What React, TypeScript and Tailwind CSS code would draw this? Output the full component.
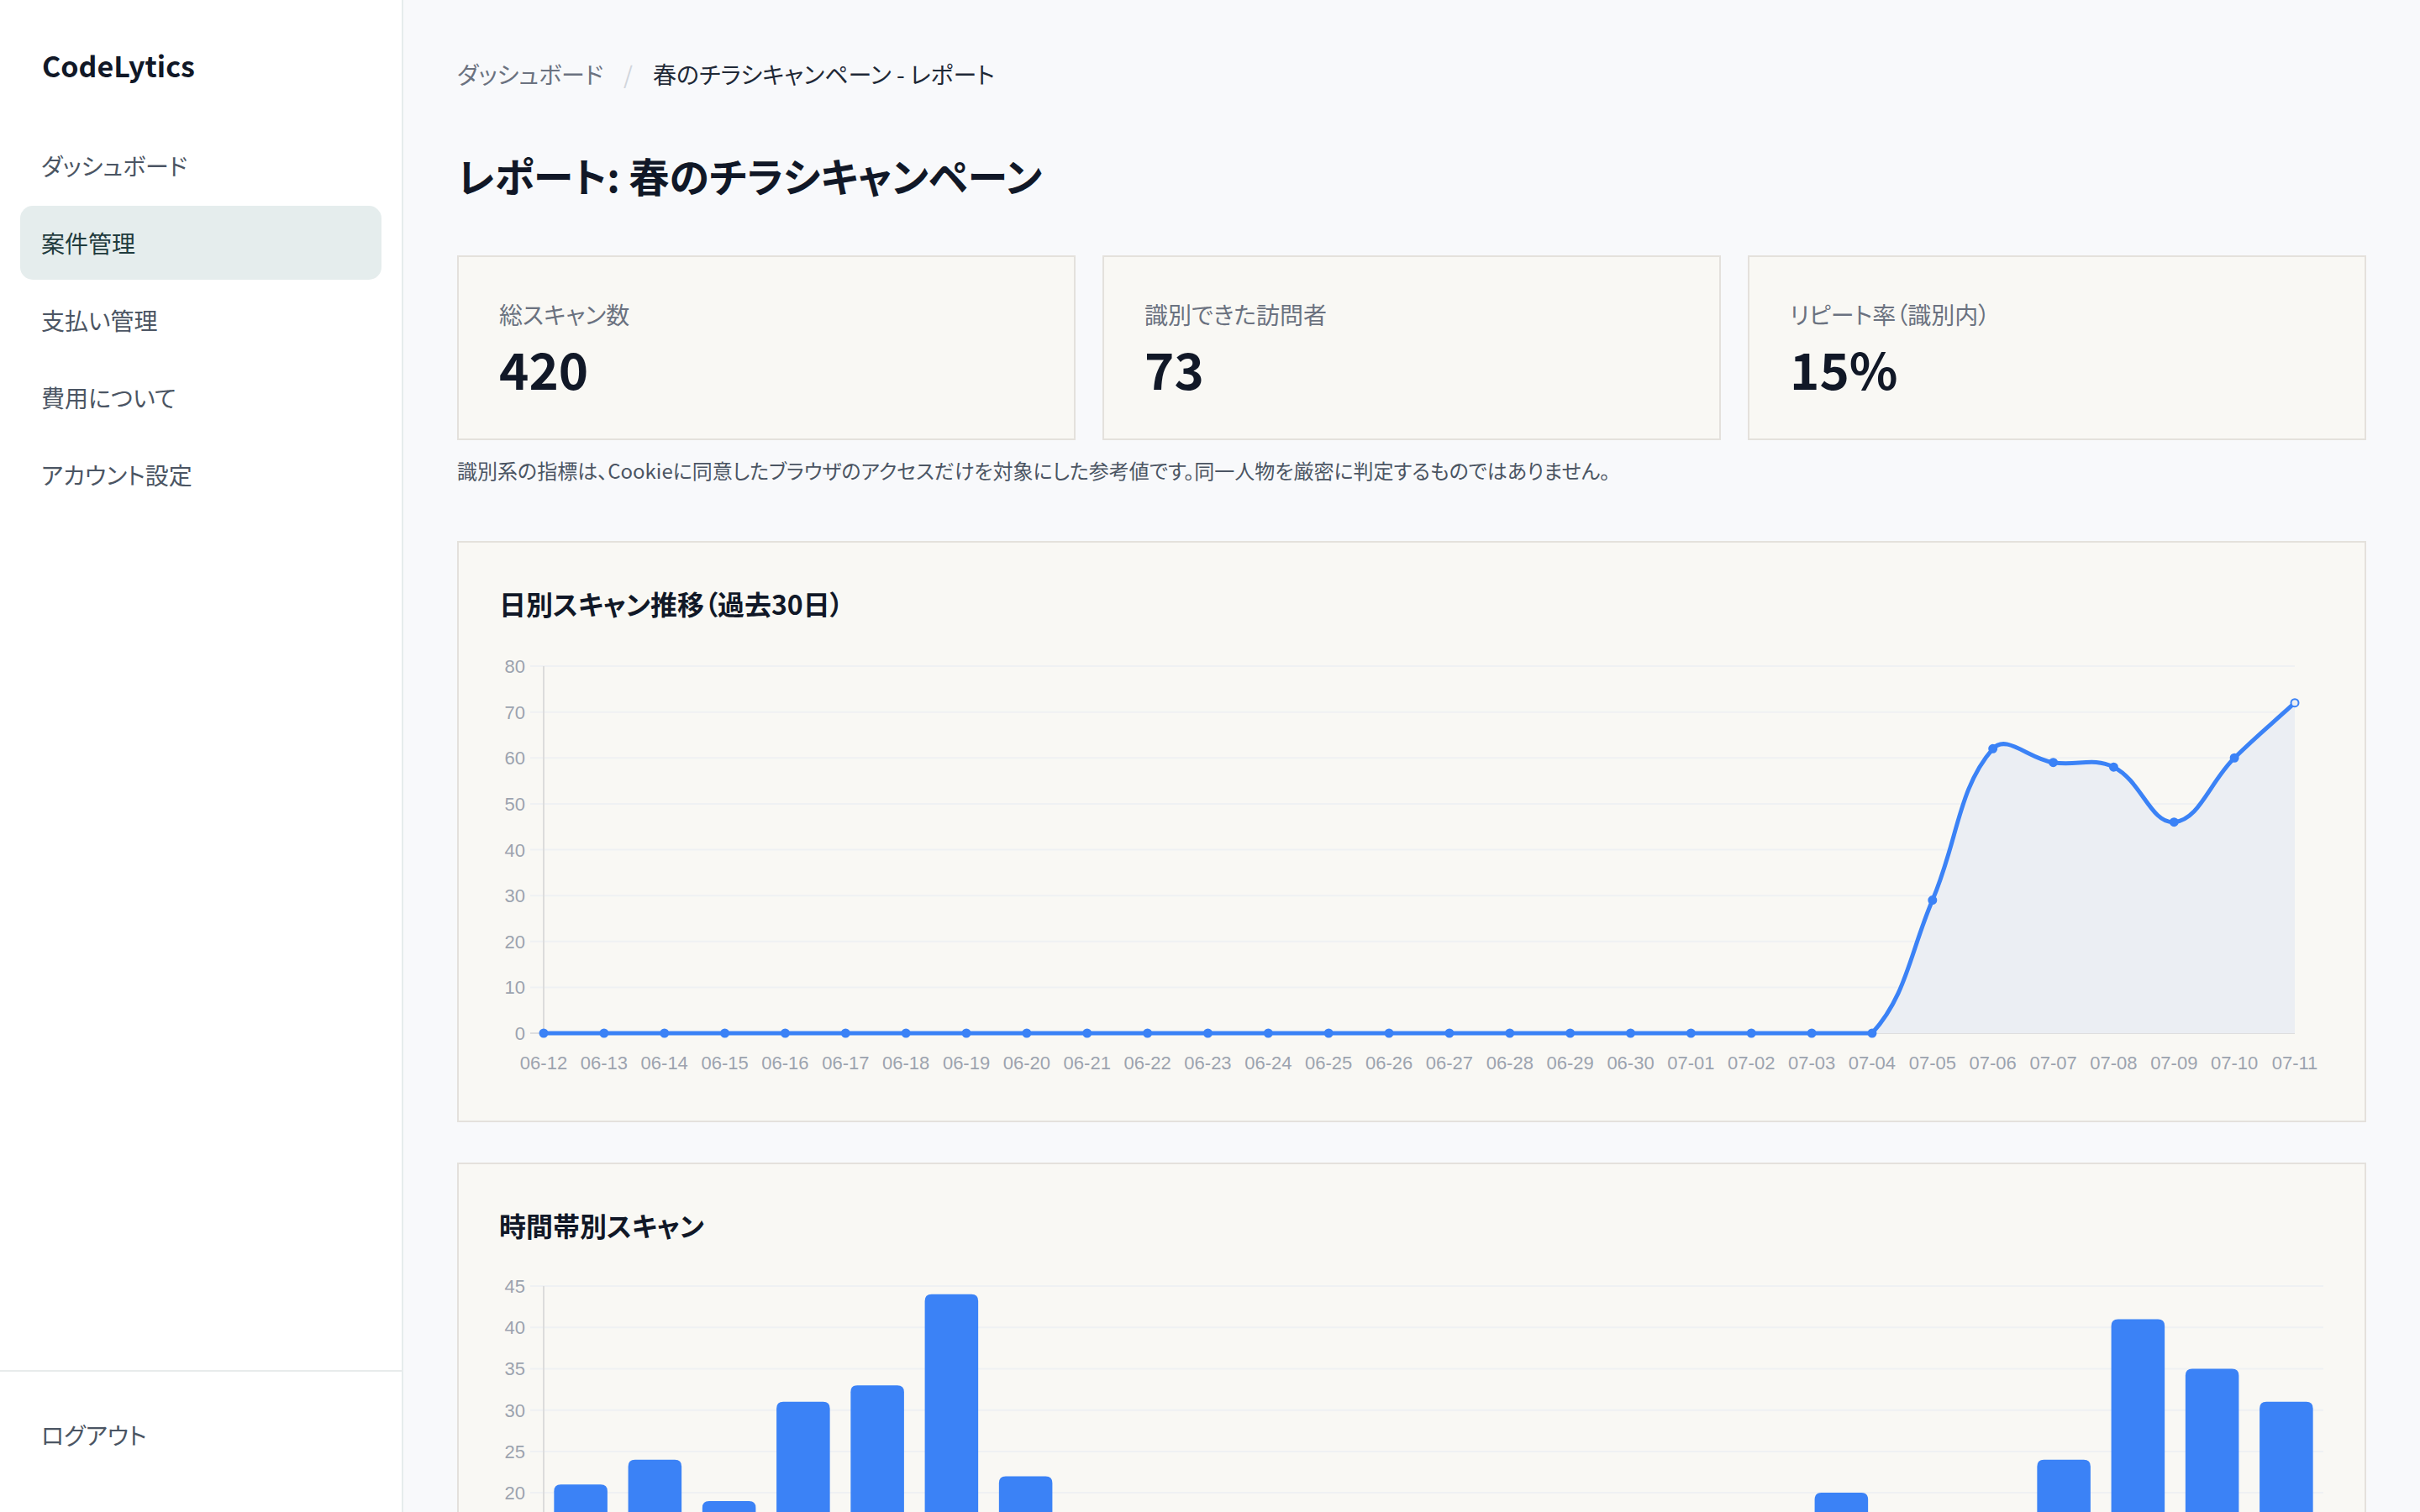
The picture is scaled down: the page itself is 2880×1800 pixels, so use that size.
import React from "react";

type Pt = { x: number; y: number };

const navItems = [
    { label: "ダッシュボード", active: false },
    { label: "案件管理", active: true },
    { label: "支払い管理", active: false },
    { label: "費用について", active: false },
    { label: "アカウント設定", active: false },
];

const stats = [
    { label: "総スキャン数", value: "420" },
    { label: "識別できた訪問者", value: "73" },
    { label: "リピート率（識別内）", value: "15%" },
];

// last 30 days
const dailyLabels = [
    ...Array.from({ length: 19 }, (_, i) => `06-${String(12 + i).padStart(2, "0")}`),
    ...Array.from({ length: 11 }, (_, i) => `07-${String(1 + i).padStart(2, "0")}`),
];
const dailyValues = [...Array(23).fill(0), 29, 62, 59, 58, 46, 60, 72];

const hourlyValues = [21, 24, 19, 31, 33, 44, 22, 10, 6, 4, 3, 2, 1, 2, 4, 7, 11, 20, 14, 11, 24, 41, 35, 31];

const CHART_W = 2172;
const CHART_H = 512;
const AXIS_FONT = "'Liberation Sans', Arial, sans-serif";

// same spline as chart.js (tension 0.4)
function splinePath(pts: Pt[], tension: number, minY: number, maxY: number) {
    const cps = pts.map((cur, i) => {
        const prev = pts[i - 1] ?? cur;
        const next = pts[i + 1] ?? cur;
        const d01 = Math.hypot(cur.x - prev.x, cur.y - prev.y);
        const d12 = Math.hypot(next.x - cur.x, next.y - cur.y);
        const sum = d01 + d12;
        const fa = sum ? (tension * d01) / sum : 0;
        const fb = sum ? (tension * d12) / sum : 0;
        const clamp = (v: number) => Math.min(maxY, Math.max(minY, v));
        return {
            prev: { x: cur.x - fa * (next.x - prev.x), y: clamp(cur.y - fa * (next.y - prev.y)) },
            next: { x: cur.x + fb * (next.x - prev.x), y: clamp(cur.y + fb * (next.y - prev.y)) },
        };
    });
    let d = `M${pts[0].x},${pts[0].y}`;
    for (let i = 1; i < pts.length; i++) {
        const a = cps[i - 1].next;
        const b = cps[i].prev;
        d += ` C${a.x},${a.y} ${b.x},${b.y} ${pts[i].x},${pts[i].y}`;
    }
    return d;
}

function DailyChart() {
    const left = 53;
    const right = 2137;
    const top = 19;
    const bottom = 456;
    const max = 80;
    const step = (right - left) / (dailyValues.length - 1);
    const yOf = (v: number) => bottom - (v / max) * (bottom - top);
    const pts = dailyValues.map((v, i) => ({ x: left + i * step, y: yOf(v) }));
    const line = splinePath(pts, 0.4, top, bottom);
    const area = `${line} L${pts[pts.length - 1].x},${bottom} L${pts[0].x},${bottom} Z`;
    const ticks = [0, 10, 20, 30, 40, 50, 60, 70, 80];

    return (
        <svg width={CHART_W} height={CHART_H} className="block">
            {ticks.map((t) => (
                <g key={t}>
                    <line x1={37} x2={right} y1={yOf(t)} y2={yOf(t)} stroke={t === 0 ? "#dedede" : "#eff1f3"} strokeWidth={2} />
                    <text x={31} y={yOf(t) + 8} textAnchor="end" fontSize={22} fill="#9ca3af" fontFamily={AXIS_FONT}>
                        {t}
                    </text>
                </g>
            ))}
            <line x1={left} x2={left} y1={top} y2={bottom} stroke="#dcdcdc" strokeWidth={2} />
            <path d={area} fill="#ebeef3" />
            <path d={line} fill="none" stroke="#3b82f6" strokeWidth={5} />
            {pts.map((p, i) => (
                <circle key={i} cx={p.x} cy={p.y} r={4.5} fill={i === pts.length - 1 ? "#ebeef3" : "#3b82f6"} stroke="#3b82f6" strokeWidth={2} />
            ))}
            {dailyLabels.map((l, i) => (
                <text key={l} x={left + i * step} y={499} textAnchor="middle" fontSize={22} fill="#9ca3af" fontFamily={AXIS_FONT}>
                    {l}
                </text>
            ))}
        </svg>
    );
}

function HourlyChart() {
    const left = 53;
    const right = 2171;
    const top = 17;
    const bottom = 460;
    const max = 45;
    const band = (right - left) / hourlyValues.length;
    const barW = band * 0.72;
    const yOf = (v: number) => bottom - (v / max) * (bottom - top);
    const ticks = [0, 5, 10, 15, 20, 25, 30, 35, 40, 45];

    return (
        <svg width={CHART_W} height={CHART_H} className="block">
            {ticks.map((t) => (
                <g key={t}>
                    <line x1={37} x2={right} y1={yOf(t)} y2={yOf(t)} stroke={t === 0 ? "#dedede" : "#eff1f3"} strokeWidth={2} />
                    <text x={31} y={yOf(t) + 8} textAnchor="end" fontSize={22} fill="#9ca3af" fontFamily={AXIS_FONT}>
                        {t}
                    </text>
                </g>
            ))}
            <line x1={left} x2={left} y1={top} y2={bottom} stroke="#dcdcdc" strokeWidth={2} />
            {hourlyValues.map((v, i) => {
                const x = left + i * band + (band - barW) / 2;
                const y = yOf(v);
                const r = 8;
                return (
                    <path
                        key={i}
                        d={`M${x},${bottom} L${x},${y + r} Q${x},${y} ${x + r},${y} L${x + barW - r},${y} Q${x + barW},${y} ${x + barW},${y + r} L${x + barW},${bottom} Z`}
                        fill="#3b82f6"
                    />
                );
            })}
            {hourlyValues.map((_, i) => (
                <text key={i} x={left + i * band + band / 2} y={499} textAnchor="middle" fontSize={22} fill="#9ca3af" fontFamily={AXIS_FONT}>
                    {`${i}時`}
                </text>
            ))}
        </svg>
    );
}

function Sidebar() {
    return (
        <aside className="w-[480px] shrink-0 h-full flex flex-col bg-white border-r-2 border-[#e6ecec]">
            <div className="pl-[50px] pt-[50px] text-[34px] leading-[56px] font-bold text-[#111827]">CodeLytics</div>
            <nav className="mt-[47px] px-6 flex flex-col gap-[4px]">
                {navItems.map((item) => (
                    <a
                        key={item.label}
                        href="#"
                        className={
                            item.active
                                ? "block rounded-[15px] bg-[#e5eded] pl-[25px] py-6 text-[28px] leading-[40px] text-[#1f3b3d]"
                                : "block rounded-[15px] pl-[25px] py-6 text-[28px] leading-[40px] text-[#4b5563]"
                        }
                    >
                        {item.label}
                    </a>
                ))}
            </nav>
            <div className="mt-auto border-t-2 border-[#e8ebeb] px-6 pt-[31px] pb-[48px]">
                <button className="block w-full text-left pl-[25px] py-6 text-[28px] leading-[40px] text-[#4b5563]">ログアウト</button>
            </div>
        </aside>
    );
}

function Card({ children, className = "" }: { children: React.ReactNode; className?: string }) {
    return <div className={`border-2 border-[#e4e1dc] bg-[#f9f8f4] p-12 ${className}`}>{children}</div>;
}

export default function App() {
    return (
        <div className="flex h-screen w-full overflow-hidden bg-[#f8f9fb] font-['Noto_Sans_CJK_JP','Noto_Sans',sans-serif] [font-feature-settings:'palt']">
            <Sidebar />
            <main className="flex-1 h-full overflow-y-auto [scrollbar-width:none] px-16 pt-[68px] pb-16">
                <div className="flex items-center text-[28px] leading-[40px]">
                    <a href="#" className="text-[#6b7280]">ダッシュボード</a>
                    <span className="mx-[24px] text-[#d1d5db]">/</span>
                    <span className="text-[#1f2937]">春のチラシキャンペーン - レポート</span>
                </div>
                <h1 className="mt-[68px] text-[48px] leading-[64px] font-bold text-[#111827]">レポート: 春のチラシキャンペーン</h1>

                <div className="mt-16 grid grid-cols-3 gap-8">
                    {stats.map((s) => (
                        <Card key={s.label}>
                            <div className="text-[28px] leading-[40px] text-[#6b7280]">{s.label}</div>
                            <div className="mt-2 text-[60px] leading-[72px] font-bold text-[#111827]">{s.value}</div>
                        </Card>
                    ))}
                </div>
                <p className="mt-5 text-[24px] leading-[32px] text-[#4b5563]">
                    識別系の指標は、Cookieに同意したブラウザのアクセスだけを対象にした参考値です。同一人物を厳密に判定するものではありません。
                </p>

                <Card className="mt-[68px]">
                    <h2 className="text-[32px] leading-[48px] font-bold text-[#111827]">日別スキャン推移（過去30日）</h2>
                    <div className="mt-8 h-[512px]">
                        <DailyChart />
                    </div>
                </Card>

                <Card className="mt-12">
                    <h2 className="text-[32px] leading-[48px] font-bold text-[#111827]">時間帯別スキャン</h2>
                    <div className="mt-8 h-[512px]">
                        <HourlyChart />
                    </div>
                </Card>
            </main>
        </div>
    );
}
